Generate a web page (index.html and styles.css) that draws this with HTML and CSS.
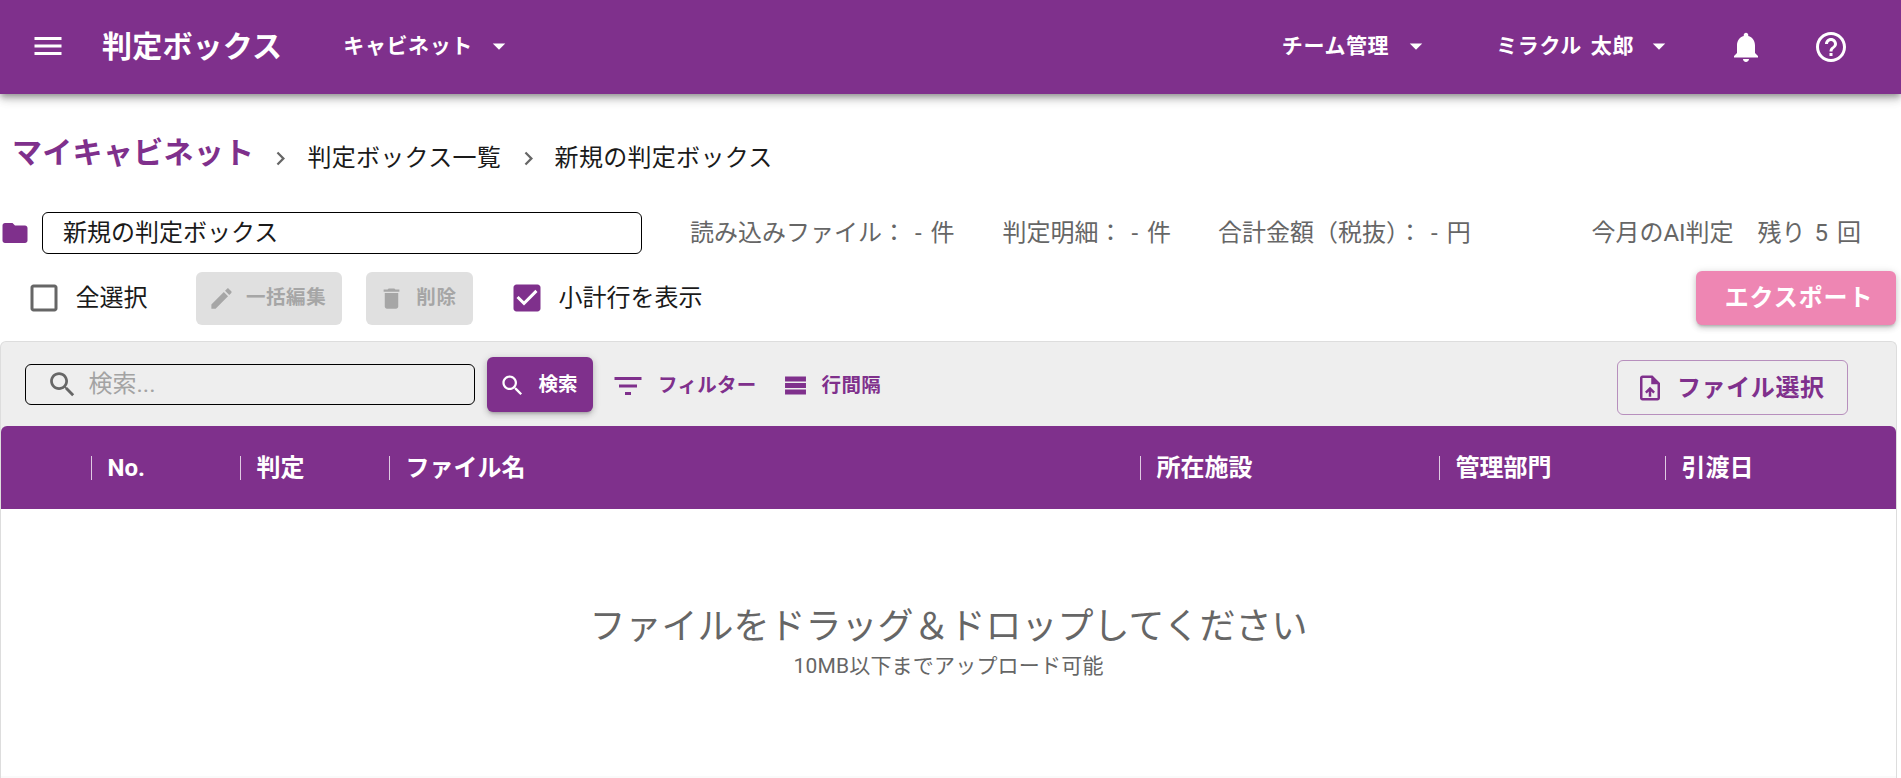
FILE: index.html
```html
<!DOCTYPE html>
<html lang="ja">
<head>
<meta charset="utf-8">
<title>判定ボックス</title>
<link rel="stylesheet" href="styles.css">
</head>
<body>
<header class="appbar">
  <button class="icon-btn menu"><svg class="i36" viewBox="0 0 24 24"><path d="M3 18h18v-2H3v2zm0-5h18v-2H3v2zm0-7v2h18V6H3z"/></svg></button>
  <div class="brand">判定ボックス</div>
  <button class="nav-btn cab">キャビネット<svg class="i30" viewBox="0 0 24 24"><path d="M7 10l5 5 5-5z"/></svg></button>
  <div class="appbar-right">
    <button class="nav-btn team">チーム管理<svg class="i30" viewBox="0 0 24 24"><path d="M7 10l5 5 5-5z"/></svg></button>
    <button class="nav-btn user">ミラクル 太郎<svg class="i30" viewBox="0 0 24 24"><path d="M7 10l5 5 5-5z"/></svg></button>
    <button class="icon-btn bell"><svg class="i36" viewBox="0 0 24 24"><path d="M12 22c1.1 0 2-.9 2-2h-4c0 1.1.89 2 2 2zm6-6v-5c0-3.07-1.64-5.64-4.5-6.32V4c0-.83-.67-1.5-1.5-1.5s-1.5.67-1.5 1.5v.68C7.63 5.36 6 7.92 6 11v5l-2 2v1h16v-1l-2-2z"/></svg></button>
    <button class="icon-btn help"><svg class="i36" viewBox="0 0 24 24"><path d="M11 18h2v-2h-2v2zm1-16C6.48 2 2 6.48 2 12s4.48 10 10 10 10-4.48 10-10S17.52 2 12 2zm0 18c-4.41 0-8-3.59-8-8s3.59-8 8-8 8 3.59 8 8-3.59 8-8 8zm0-14c-2.21 0-4 1.79-4 4h2c0-1.1.9-2 2-2s2 .9 2 2c0 2-3 1.75-3 5h2c0-2.25 3-2.5 3-5 0-2.21-1.79-4-4-4z"/></svg></button>
  </div>
</header>

<nav class="crumbs">
  <span class="crumb-root">マイキャビネット</span>
  <svg class="i27 sep" viewBox="0 0 24 24"><path d="M10 6L8.59 7.41 13.17 12l-4.58 4.59L10 18l6-6z"/></svg>
  <span class="crumb">判定ボックス一覧</span>
  <svg class="i27 sep" viewBox="0 0 24 24"><path d="M10 6L8.59 7.41 13.17 12l-4.58 4.59L10 18l6-6z"/></svg>
  <span class="crumb">新規の判定ボックス</span>
</nav>

<section class="info-row">
  <svg class="i30 folder" viewBox="0 0 24 24"><path d="M10 4H4c-1.1 0-1.99.9-1.99 2L2 18c0 1.1.9 2 2 2h16c1.1 0 2-.9 2-2V8c0-1.1-.9-2-2-2h-8l-2-2z"/></svg>
  <div class="name-field">新規の判定ボックス</div>
  <div class="stat s1">読み込みファイル： - 件</div>
  <div class="stat s2">判定明細： - 件</div>
  <div class="stat s3">合計金額（税抜）： - 円</div>
  <div class="stat s4">今月のAI判定　残り 5 回</div>
</section>

<section class="action-row">
  <label class="check c1"><svg class="i36 unchecked" viewBox="0 0 24 24"><path d="M19 5v14H5V5h14m0-2H5c-1.1 0-2 .9-2 2v14c0 1.1.9 2 2 2h14c1.1 0 2-.9 2-2V5c0-1.1-.9-2-2-2z"/></svg><span>全選択</span></label>
  <button class="dis-btn edit"><svg class="i27" viewBox="0 0 24 24"><path d="M3 17.25V21h3.75L17.81 9.94l-3.75-3.75L3 17.25zM20.71 7.04c.39-.39.39-1.02 0-1.41l-2.34-2.34c-.39-.39-1.02-.39-1.41 0l-1.83 1.83 3.75 3.75 1.83-1.83z"/></svg>一括編集</button>
  <button class="dis-btn del"><svg class="i27" viewBox="0 0 24 24"><path d="M6 19c0 1.1.9 2 2 2h8c1.1 0 2-.9 2-2V7H6v12zM19 4h-3.5l-1-1h-5l-1 1H5v2h14V4z"/></svg>削除</button>
  <label class="check c2"><svg class="i36 checked" viewBox="0 0 24 24"><path d="M19 3H5c-1.11 0-2 .9-2 2v14c0 1.1.89 2 2 2h14c1.11 0 2-.9 2-2V5c0-1.1-.89-2-2-2zm-9 14l-5-5 1.41-1.41L10 14.17l7.59-7.59L19 8l-9 9z"/></svg><span>小計行を表示</span></label>
  <button class="export">エクスポート</button>
</section>

<main class="panel">
  <div class="toolbar">
    <div class="search-field"><svg class="i33" viewBox="0 0 24 24"><path d="M15.5 14h-.79l-.28-.27C15.41 12.59 16 11.11 16 9.5 16 5.91 13.09 3 9.5 3S3 5.91 3 9.5 5.91 16 9.5 16c1.61 0 3.09-.59 4.23-1.57l.27.28v.79l5 4.99L20.49 19l-4.99-5zm-6 0C7.01 14 5 11.99 5 9.5S7.01 5 9.5 5 14 7.01 14 9.5 11.99 14 9.5 14z"/></svg><span>検索...</span></div>
    <button class="search-btn"><svg class="i27" viewBox="0 0 24 24"><path d="M15.5 14h-.79l-.28-.27C15.41 12.59 16 11.11 16 9.5 16 5.91 13.09 3 9.5 3S3 5.91 3 9.5 5.91 16 9.5 16c1.61 0 3.09-.59 4.23-1.57l.27.28v.79l5 4.99L20.49 19l-4.99-5zm-6 0C7.01 14 5 11.99 5 9.5S7.01 5 9.5 5 14 7.01 14 9.5 11.99 14 9.5 14z"/></svg>検索</button>
    <button class="tool-btn filter"><svg class="i36" viewBox="0 0 24 24"><path d="M10 18h4v-2h-4v2zM3 6v2h18V6H3zm3 7h12v-2H6v2z"/></svg>フィルター</button>
    <button class="tool-btn density"><svg class="i27" viewBox="0 0 24 24"><path d="M2.700 4h18.600v4.400H2.700zm0 5.800h18.600v4.400H2.700zm0 5.800h18.600V20H2.700z"/></svg>行間隔</button>
    <button class="file-btn"><svg class="i30" viewBox="0 0 24 24"><path d="M14 2H6c-1.100 0-1.990.9-1.990 2L4 20c0 1.100.89 2 1.990 2H18c1.100 0 2-.9 2-2V8l-6-6zm4 18H6V4h7v5h5v11zM8 15.010l1.410 1.410L11 14.840V19h2v-4.160l1.590 1.590L16 15.010 12.010 11 8 15.010z"/></svg>ファイル選択</button>
  </div>
  <div class="table-head">
    <div class="th col-no">No.</div>
    <div class="th col-judge">判定</div>
    <div class="th col-file">ファイル名</div>
    <div class="th col-place">所在施設</div>
    <div class="th col-dept">管理部門</div>
    <div class="th col-date">引渡日</div>
  </div>
  <div class="dropzone">
    <div class="drop-title">ファイルをドラッグ＆ドロップしてください</div>
    <div class="drop-sub">10MB以下までアップロード可能</div>
  </div>
</main>
</body>
</html>
```
FILE: styles.css
```css
* { box-sizing: border-box; }
html, body { height: 100%; }
body {
  margin: 0;
  overflow: hidden;
  background: #fff;
  color: #1a1a1a;
  font-family: Roboto, "Noto Sans CJK JP", sans-serif;
  font-size: 24px;
  line-height: 1.5;
  display: flex;
  flex-direction: column;
}
button { font: inherit; border: 0; background: none; padding: 0; color: inherit; }
svg { display: block; fill: currentColor; flex: none; }
.i27 { width: 27px; height: 27px; }
.i30 { width: 30px; height: 30px; }
.i33 { width: 33px; height: 33px; }
.i36 { width: 36px; height: 36px; }

/* app bar */
.appbar {
  height: 94px;
  flex: none;
  background: #7f308c;
  color: #fff;
  display: flex;
  align-items: center;
  padding-left: 30px;
  box-shadow: 0 3px 6px -1px rgba(0,0,0,.3), 0 6px 8px 0 rgba(0,0,0,.14), 0 1px 15px 0 rgba(0,0,0,.12);
  position: relative;
  z-index: 2;
}
.icon-btn { display: flex; }
.menu { padding-bottom: 2px; }
.brand { margin-left: 36px; font-size: 30px; font-weight: 700; line-height: 1; letter-spacing: .2px; }
.nav-btn {
  display: flex;
  align-items: center;
  font-size: 21px;
  font-weight: 700;
  letter-spacing: .6px;
  word-spacing: 3px;
  line-height: 1;
  padding-bottom: 2px;
}
.nav-btn svg { margin-left: 10px; }
.team svg { margin-left: 12px; }
.cab { margin-left: 61px; }
.cab svg { margin-left: 11px; }
.appbar-right { margin-left: auto; display: flex; align-items: center; padding-right: 52px; }
.user { margin-left: 65px; }
.bell { margin-left: 54px; }
.help { margin-left: 49px; }

/* breadcrumbs */
.crumbs { flex: none; display: flex; align-items: center; height: 101px; padding-left: 12px; padding-top: 27px; }
.crumb-root { font-size: 30px; font-weight: 700; color: #7f308c; line-height: 1; margin-top: -10px; margin-right: -.5px; letter-spacing: .3px; }
.crumb { line-height: 1; letter-spacing: .3px; }
.sep { color: #666; margin: 0 13px 0 13.5px; }

/* name + stats */
.info-row { flex: none; display: flex; align-items: center; height: 42px; margin-top: 17px; color: #666; }
.folder { color: #7f308c; }
.name-field {
  margin-left: 12px;
  width: 600px;
  height: 42px;
  border: 1px solid #000;
  border-radius: 6px;
  padding-left: 20px;
  color: #1a1a1a;
  line-height: 40px;
}
.stat { line-height: 1; white-space: nowrap; word-spacing: 3px; }
.s1 { margin-left: 48px; }
.s2 { margin-left: 48px; }
.s3 { margin-left: 47px; }
.s4 { margin-left: auto; margin-right: 40px; }

/* action row */
.action-row { flex: none; display: flex; align-items: center; height: 54px; margin-top: 17px; padding-right: 5px; }
.check { display: flex; align-items: center; line-height: 1; }
.check span { margin-left: 13.5px; }
.c1 { margin-left: 26px; }
.c2 { margin-left: 36.5px; }
.unchecked { color: #666; }
.checked { color: #7f308c; }
.dis-btn {
  height: 53px;
  border-radius: 6px;
  background: #e0e0e0;
  color: #a6a6a6;
  font-size: 19.5px;
  font-weight: 700;
  letter-spacing: .6px;
  display: flex;
  align-items: center;
  padding: 0 16px 0 12px;
}
.dis-btn svg { margin-right: 11px; }
.edit { margin-left: 48.4px; }
.del { margin-left: 24px; }
.export {
  margin-left: auto;
  width: 200px;
  height: 54px;
  padding-left: 6px;
  border-radius: 6px;
  background: #ee86b3;
  color: #fff;
  font-size: 24px;
  font-weight: 700;
  letter-spacing: .9px;
  box-shadow: 0 3px 3px -2px rgba(0,0,0,.2), 0 3px 6px 0 rgba(0,0,0,.14), 0 1px 8px 0 rgba(0,0,0,.12);
}

/* panel */
.panel {
  flex: 1;
  margin: 16px 4px 0 0;
  display: flex;
  flex-direction: column;
  min-height: 0;
  border-radius: 6px 6px 0 0;
  border: 1px solid #ddd;
  border-bottom: 0;
  background: #eee;
}
.toolbar { flex: none; height: 84px; display: flex; align-items: center; padding: 1px 0 0 24px; }
.search-field {
  width: 450px;
  height: 41px;
  margin-top: -1px;
  border: 1px solid #000;
  border-radius: 6px;
  display: flex;
  align-items: center;
  padding-left: 20px;
  color: #666;
}
.search-field span { margin-left: 9.5px; color: #a3a3a3; line-height: 1; }
.search-btn {
  margin-left: 12px;
  width: 106px;
  height: 55px;
  border-radius: 6px;
  background: #7f308c;
  color: #fff;
  font-size: 19.5px;
  font-weight: 700;
  display: flex;
  align-items: center;
  padding: 1px 0 0 12px;
  box-shadow: 0 3px 3px -2px rgba(0,0,0,.2), 0 3px 6px 0 rgba(0,0,0,.14), 0 1px 8px 0 rgba(0,0,0,.12);
}
.search-btn svg { margin-right: 12.4px; }
.tool-btn {
  display: flex;
  align-items: center;
  margin-top: 2px;
  color: #7f308c;
  font-size: 19.5px;
  font-weight: 700;
  letter-spacing: .3px;
  line-height: 1;
}
.filter { margin-left: 16.5px; }
.filter svg { margin-right: 12.5px; }
.density { margin-left: 25.6px; }
.density svg { margin-right: 12.4px; }
.file-btn {
  margin-left: auto;
  margin-right: 48px;
  margin-top: 6px;
  width: 231px;
  height: 55px;
  border: 1px solid rgba(127,48,140,.5);
  border-radius: 6px;
  color: #7f308c;
  font-size: 24px;
  font-weight: 700;
  letter-spacing: .6px;
  display: flex;
  align-items: center;
  padding-left: 17px;
}
.file-btn svg { margin-right: 12px; }

/* table */
.table-head {
  flex: none;
  height: 83px;
  background: #7f308c;
  color: #fff;
  border-radius: 6px 6px 0 0;
  display: grid;
  grid-template-columns: 90px 149px 149px 751px 299px 226px 1fr;
  grid-template-areas: ". no judge file place dept date";
  align-items: center;
}
.th { position: relative; padding-left: 16.5px; font-weight: 700; line-height: 1; font-size: 24px; white-space: nowrap; }
.th::before {
  content: "";
  position: absolute;
  left: 0;
  top: 0;
  bottom: 0;
  width: 1px;
  background: rgba(255,255,255,.75);
}
.col-no { grid-area: no; }
.col-judge { grid-area: judge; }
.col-file { grid-area: file; }
.col-place { grid-area: place; }
.col-dept { grid-area: dept; }
.col-date { grid-area: date; }

/* drop zone */
.dropzone {
  flex: 1;
  background: #fff;
  border-bottom: 2px solid #fafafa;
  display: flex;
  flex-direction: column;
  align-items: center;
  padding-top: 100px;
  color: #666;
}
.drop-title { font-size: 36px; line-height: 1; }
.drop-sub { font-size: 21px; line-height: 1; margin-top: 11px; letter-spacing: .2px; }
```
